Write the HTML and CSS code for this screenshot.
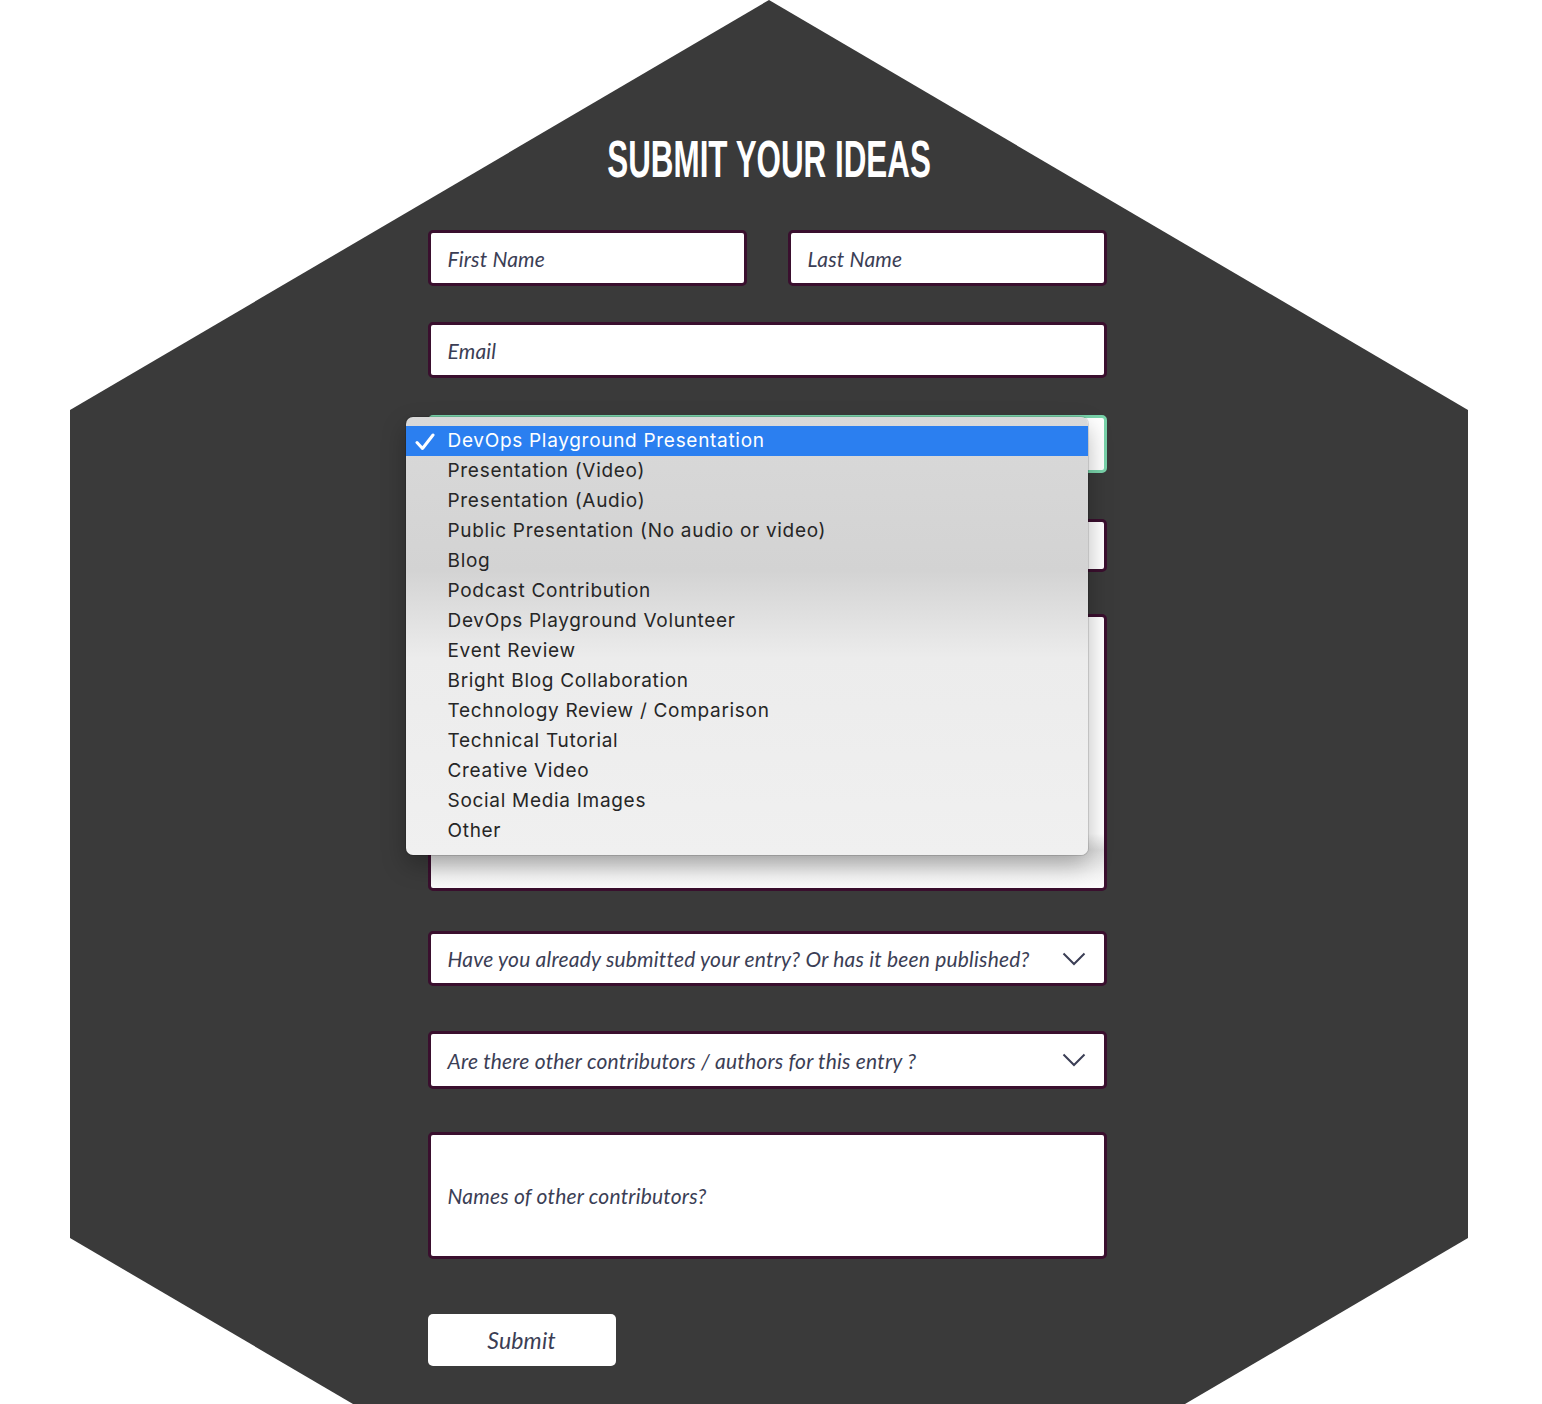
FILE: index.html
```html
<!DOCTYPE html>
<html>
<head>
<meta charset="utf-8">
<link rel="stylesheet" href="styles.css">
</head>
<body>
<div class="page">
  <div class="hex">
    <h1 class="title"><span>SUBMIT YOUR IDEAS</span></h1>
    <form class="form">
      <div class="row">
        <div class="field name">First Name</div>
        <div class="field name">Last Name</div>
      </div>
      <div class="field email">Email</div>
      <div class="field focused"></div>
      <div class="field plain"></div>
      <div class="field area"></div>
      <div class="field select s1">Have you already submitted your entry? Or has it been published?
        <svg class="chev" width="24" height="14" viewBox="0 0 24 14"><path d="M1.5 1.5 L12 12 L22.5 1.5" fill="none" stroke="#3b3e55" stroke-width="2"/></svg>
      </div>
      <div class="field select s2">Are there other contributors / authors for this entry ?
        <svg class="chev" width="24" height="14" viewBox="0 0 24 14"><path d="M1.5 1.5 L12 12 L22.5 1.5" fill="none" stroke="#3b3e55" stroke-width="2"/></svg>
      </div>
      <div class="field names">Names of other contributors?</div>
      <div class="submit">Submit</div>

      <ul class="menu">
        <li class="sel"><svg class="check" width="20" height="18" viewBox="0 0 20 18"><path d="M2 9.5 L7.5 15.5 L18 2" fill="none" stroke="#fff" stroke-width="3" stroke-linecap="round" stroke-linejoin="round"/></svg>DevOps Playground Presentation</li>
        <li>Presentation (Video)</li>
        <li>Presentation (Audio)</li>
        <li>Public Presentation (No audio or video)</li>
        <li>Blog</li>
        <li>Podcast Contribution</li>
        <li>DevOps Playground Volunteer</li>
        <li>Event Review</li>
        <li>Bright Blog Collaboration</li>
        <li>Technology Review / Comparison</li>
        <li>Technical Tutorial</li>
        <li>Creative Video</li>
        <li>Social Media Images</li>
        <li>Other</li>
      </ul>
    </form>
  </div>
</div>
</body>
</html>
```
FILE: styles.css
```css
html, body {
  margin: 0;
  padding: 0;
  background: #ffffff;
}
.page {
  height: 1404px;
  overflow: hidden;
}
.hex {
  margin-left: 70px;
  width: 1398px;
  height: 1648px;
  background: #3a3a3a;
  clip-path: polygon(50% 0, 100% 410px, 100% 1238px, 50% 100%, 0 1238px, 0 410px);
  display: flex;
  flex-direction: column;
  align-items: center;
  padding-top: 130px;
  box-sizing: border-box;
}
.title {
  margin: 0;
  height: 60px;
  line-height: 60px;
  font-family: "Liberation Sans", Arial, sans-serif;
  font-weight: bold;
  font-size: 51px;
  color: #ffffff;
  text-align: center;
}
.title span {
  display: inline-block;
  transform: scaleX(0.615);
}
.form {
  position: relative;
  width: 679px;
  margin-top: 40px;
  margin-right: 4px;
  display: flex;
  flex-direction: column;
  font-family: Lato, "Open Sans", sans-serif;
  font-style: italic;
  font-size: 21px;
  letter-spacing: 0.2px;
  color: #3b3e55;
}
.row {
  display: flex;
  gap: 41px;
}
.field {
  box-sizing: border-box;
  background: #ffffff;
  border: 3px solid #3a0f2e;
  border-radius: 5px;
  padding: 0 17px;
  display: flex;
  align-items: center;
}
.name {
  width: 319px;
  height: 56px;
}
.email {
  margin-top: 36px;
  height: 56px;
}
.focused {
  margin-top: 37px;
  height: 58px;
  border-color: #79d3aa;
}
.plain {
  margin-top: 46px;
  height: 53px;
}
.area {
  margin-top: 42px;
  height: 277px;
  background: linear-gradient(to bottom, #ffffff 0%, #ffffff 80%, #dcdcdc 86%, #f4f4f4 95%, #fbfbfb 100%);
}
.select {
  justify-content: space-between;
  padding-right: 18px;
}
.s1 {
  margin-top: 40px;
  height: 55px;
}
.s2 {
  margin-top: 45px;
  height: 58px;
}
.chev {
  flex: none;
}
.names {
  margin-top: 43px;
  height: 127px;
}
.submit {
  margin-top: 55px;
  width: 188px;
  height: 52px;
  background: #ffffff;
  border-radius: 5px;
  display: flex;
  align-items: center;
  justify-content: center;
  font-size: 23px;
}
.menu {
  position: absolute;
  left: -22px;
  top: 187px;
  width: 682px;
  margin: 0;
  padding: 9px 0;
  list-style: none;
  box-sizing: border-box;
  border-radius: 7px;
  background: linear-gradient(to bottom, #d9d9d9 0%, #d3d3d3 35%, #ececec 55%, #f0f0f0 100%);
  box-shadow: 0 0 0 1px rgba(0,0,0,0.12), 0 10px 24px rgba(0,0,0,0.28);
  font-family: Inter, "Noto Sans", sans-serif;
  font-style: normal;
  font-size: 19px;
  letter-spacing: 0.7px;
  color: #262626;
}
.menu li {
  position: relative;
  height: 30px;
  line-height: 30px;
  padding-left: 42px;
  white-space: nowrap;
}
.menu li.sel {
  background: #2b7ff0;
  color: #ffffff;
}
.check {
  position: absolute;
  left: 9px;
  top: 7px;
}
```
